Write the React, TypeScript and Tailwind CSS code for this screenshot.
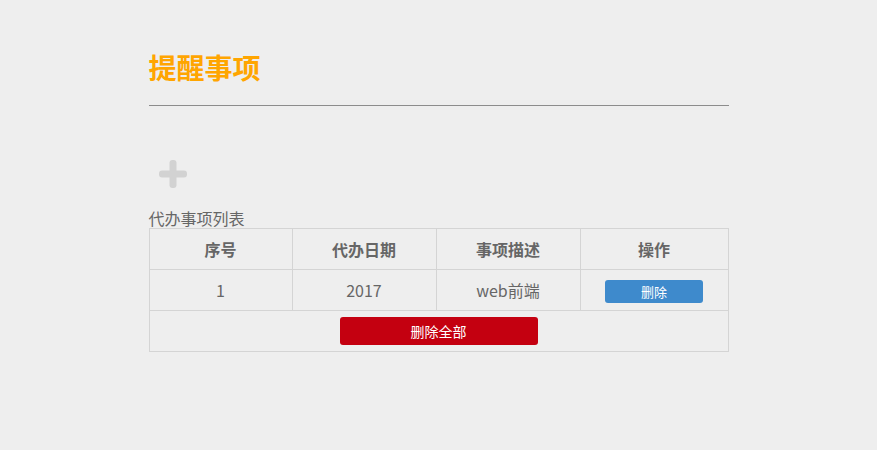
import React from 'react';

const items = [{ id: 1, date: '2017', desc: 'web前端' }];

const PlusIcon: React.FC = () => (
  <svg width="30" height="30" viewBox="0 0 30 30" className="block">
    <rect x="11.5" y="1" width="7" height="28" rx="3" fill="#d2d2d2" />
    <rect x="1" y="11.5" width="28" height="7" rx="3" fill="#d2d2d2" />
  </svg>
);

export default function App() {
  const cell = 'border border-[#d4d4d4] text-center align-middle p-0';

  return (
    <div
      className="min-h-[450px] bg-[#eeeeee] text-[#666]"
      style={{ fontFamily: '"Noto Sans CJK SC", "Noto Sans", sans-serif' }}
    >
      <div className="w-[580px] mx-auto pt-[47px]">
        <h1 className="text-[28px] leading-[40px] font-bold text-[#ffa500]">提醒事项</h1>
        <hr className="mt-[18px] border-0 border-t border-[#8c8c8c]" />

        <button className="mt-[53px] ml-[9px] block">
          <PlusIcon />
        </button>

        <div className="mt-[19px] text-[16px] leading-[20px]">代办事项列表</div>

        <table className="w-[579px] border-collapse table-fixed text-[16px]">
          <colgroup>
            <col className="w-[143px]" />
            <col className="w-[144px]" />
            <col className="w-[144px]" />
            <col className="w-[148px]" />
          </colgroup>
          <thead>
            <tr className="h-[41px]">
              <th className={`${cell} font-bold`}>序号</th>
              <th className={`${cell} font-bold`}>代办日期</th>
              <th className={`${cell} font-bold`}>事项描述</th>
              <th className={`${cell} font-bold`}>操作</th>
            </tr>
          </thead>
          <tbody>
            {items.map((it) => (
              <tr key={it.id} className="h-[41px]">
                <td className={cell}>{it.id}</td>
                <td className={cell}>{it.date}</td>
                <td className={cell}>{it.desc}</td>
                <td className={cell}>
                  <button className="inline-block align-middle w-[98px] h-[23px] rounded-[3px] bg-[#3e8acc] text-white text-[13px] leading-[23px]">
                    删除
                  </button>
                </td>
              </tr>
            ))}
            <tr className="h-[41px]">
              <td className={cell} colSpan={4}>
                <button className="inline-block align-middle w-[198px] h-[28px] rounded-[3px] bg-[#c40010] text-white text-[14px] leading-[28px]">
                  删除全部
                </button>
              </td>
            </tr>
          </tbody>
        </table>
      </div>
    </div>
  );
}
